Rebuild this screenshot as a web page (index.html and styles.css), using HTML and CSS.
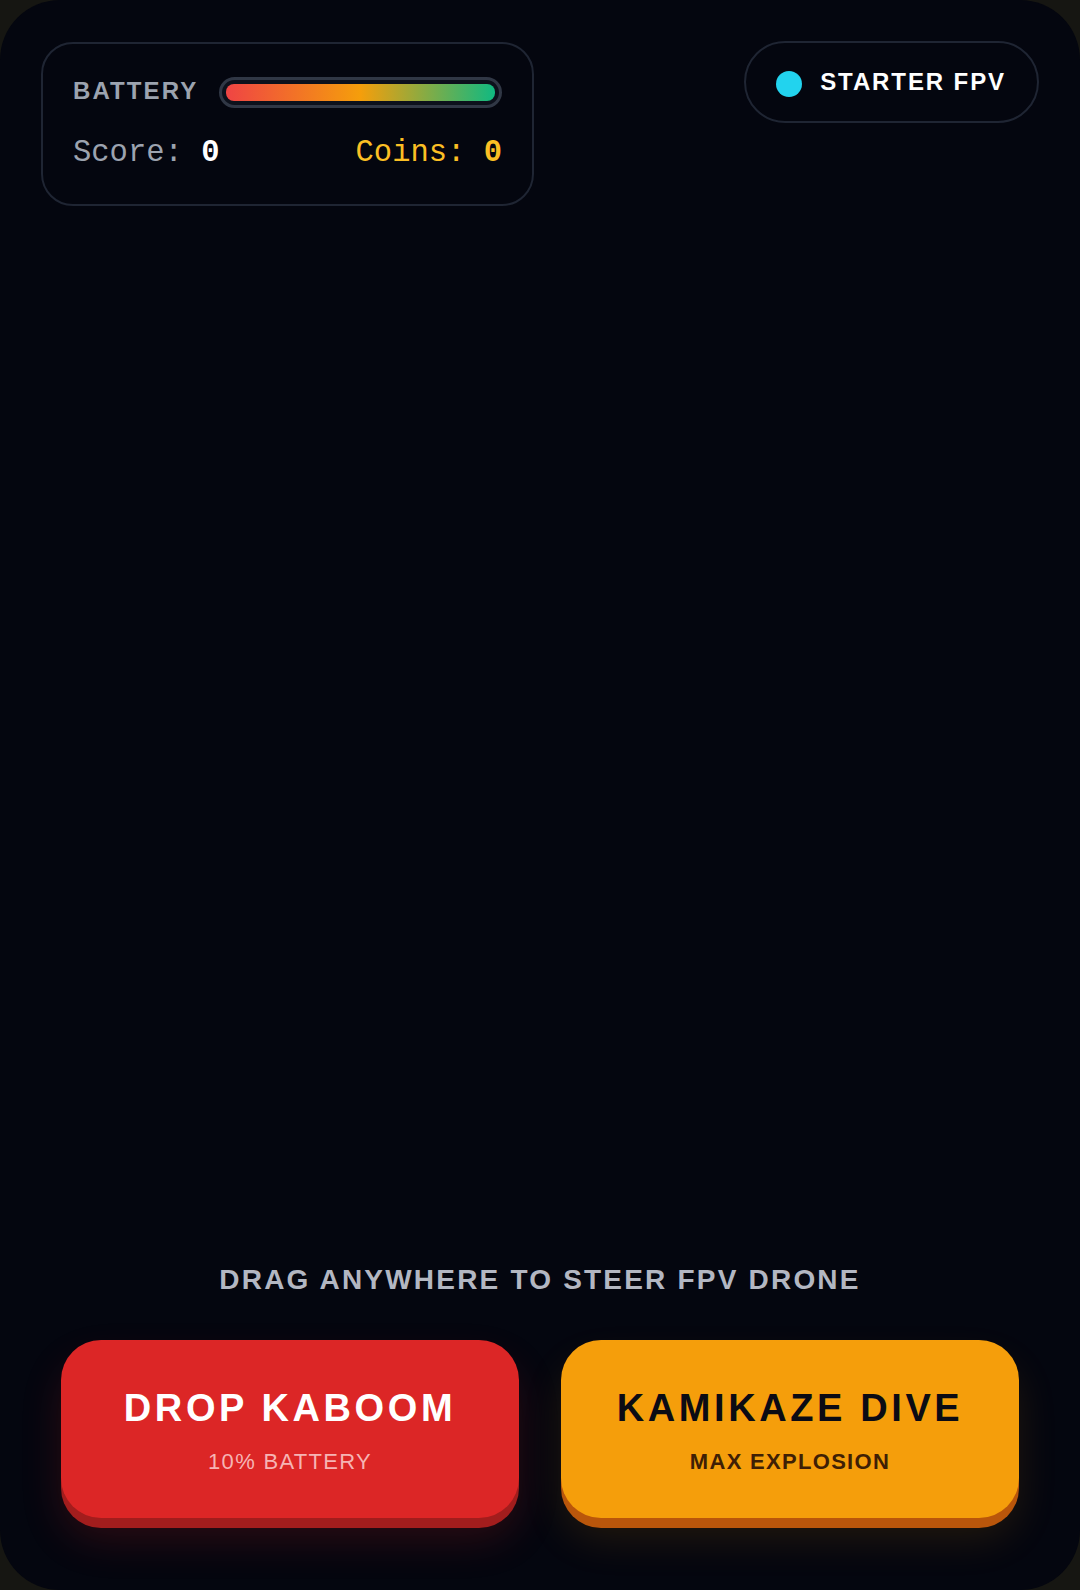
FILE: index.html
```html
<!DOCTYPE html>
<html lang="en">
<head>
    <meta charset="UTF-8">
    <meta name="viewport" content="width=device-width, initial-scale=1.0">
    <title>FPV Drone</title>
    <link rel="stylesheet" href="styles.css">
</head>
<body>
    <div class="app">
        <div class="top-bar">
            <div class="hud">
                <div class="hud-row">
                    <span class="hud-label">BATTERY</span>
                    <div class="battery-track">
                        <div class="battery-fill" style="width: 100%"></div>
                    </div>
                </div>
                <div class="hud-row stats">
                    <span class="stat">Score: <b id="score">0</b></span>
                    <span class="stat coins">Coins: <b id="coins">0</b></span>
                </div>
            </div>
            <div class="drone-badge">
                <span class="dot"></span>
                <span>STARTER FPV</span>
            </div>
        </div>

        <div class="field"></div>

        <p class="hint">DRAG ANYWHERE TO STEER FPV DRONE</p>

        <div class="actions">
            <button class="action drop">
                <span class="action-title">DROP KABOOM</span>
                <span class="action-sub">10% BATTERY</span>
            </button>
            <button class="action dive">
                <span class="action-title">KAMIKAZE DIVE</span>
                <span class="action-sub">MAX EXPLOSION</span>
            </button>
        </div>
    </div>
</body>
</html>
```

FILE: styles.css
```css
body {
    margin: 0;
    background-color: #161612;
    font-family: "Liberation Sans", Arial, sans-serif;
}

.app {
    width: 1080px;
    height: 1590px;
    box-sizing: border-box;
    border-radius: 60px;
    background-color: #04060f;
    display: flex;
    flex-direction: column;
    padding: 41px 41px 72px;
}

.top-bar {
    display: flex;
    justify-content: space-between;
    align-items: flex-start;
}

.hud {
    width: 493px;
    box-sizing: border-box;
    border: 2px solid #1f2533;
    border-radius: 32px;
    padding: 33px 30px 34px;
    display: flex;
    flex-direction: column;
    gap: 28px;
    margin-top: 1px;
}

.hud-row {
    display: flex;
    align-items: center;
    justify-content: space-between;
}

.hud-label {
    color: #9ca3af;
    font-size: 24px;
    line-height: 1;
    font-weight: bold;
    letter-spacing: 2.1px;
    margin-bottom: 4px;
}

.battery-track {
    width: 283px;
    height: 31px;
    box-sizing: border-box;
    border: 3px solid #303745;
    border-radius: 16px;
    background-color: #0d111c;
    padding: 4px;
}

.battery-fill {
    height: 100%;
    border-radius: 8px;
    background: linear-gradient(90deg, #ef4444 0%, #f59e0b 50%, #10b981 100%);
}

.stats {
    font-family: "Liberation Mono", "Courier New", monospace;
    font-size: 30.5px;
}

.stat {
    color: #9ca3af;
}

.stat b {
    color: #fff;
}

.coins,
.coins b {
    color: #fbbf24;
}

.drone-badge {
    display: flex;
    align-items: center;
    gap: 18px;
    height: 82px;
    box-sizing: border-box;
    border: 2px solid #1f2533;
    border-radius: 41px;
    padding: 0 31px 0 30px;
    color: #fff;
    font-size: 24px;
    font-weight: bold;
    letter-spacing: 1.9px;
}

.dot {
    width: 26px;
    height: 26px;
    border-radius: 50%;
    background-color: #22d3ee;
    margin-top: 4px;
}

.field {
    flex: 1;
}

.hint {
    margin: 0 0 44px;
    text-align: center;
    color: #b3b7c2;
    font-size: 28px;
    font-weight: bold;
    letter-spacing: 2.2px;
}

.actions {
    display: flex;
    gap: 42px;
    padding: 0 20px;
}

.action {
    flex: 1;
    height: 178px;
    border: none;
    border-radius: 40px;
    display: flex;
    flex-direction: column;
    align-items: center;
    justify-content: center;
    gap: 24px;
    padding-top: 4px;
    font-family: inherit;
    cursor: pointer;
}

.action-title {
    font-size: 38px;
    font-weight: bold;
    line-height: 1;
    letter-spacing: 3.6px;
}

.action-sub {
    font-size: 22px;
    line-height: 1;
    letter-spacing: 1.3px;
}

.drop {
    background-color: #dc2626;
    color: #fff;
    box-shadow: 0 10px 0 #a21d1d, 0 22px 40px rgba(220, 38, 38, 0.18);
}

.drop .action-sub {
    color: #f6b4b4;
}

.dive {
    background-color: #f59e0b;
    color: #0b0b14;
    box-shadow: 0 10px 0 #b9560b, 0 22px 40px rgba(245, 158, 11, 0.12);
}

.dive .action-sub {
    color: #3f1f05;
    font-weight: bold;
}
```
